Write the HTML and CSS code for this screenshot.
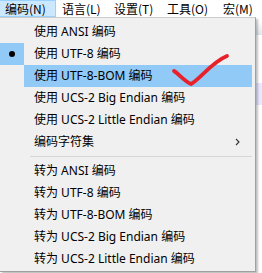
FILE: index.html
```html
<!DOCTYPE html>
<html>
<head>
<meta charset="utf-8">
<link rel="stylesheet" href="styles.css">
</head>
<body>
<div class="window">
  <nav class="menubar">
    <span class="mb-item active w1">编码(N)</span>
    <span class="mb-item w2">语言(L)</span>
    <span class="mb-item w3">设置(T)</span>
    <span class="mb-item w4">工具(O)</span>
    <span class="mb-item">宏(M)</span>
  </nav>
  <div class="workspace">
    <div class="toolbar"></div>
    <div class="editor">
      <div class="curline"></div>
    </div>
  </div>
  <div class="dropdown">
    <div class="item"><span class="gutter"></span><span class="label">使用 ANSI 编码</span></div>
    <div class="item"><span class="gutter checked"><span class="dot"></span></span><span class="label">使用 UTF-8 编码</span></div>
    <div class="item hover"><span class="gutter"></span><span class="label">使用 UTF-8-BOM 编码</span></div>
    <div class="item"><span class="gutter"></span><span class="label">使用 UCS-2 Big Endian 编码</span></div>
    <div class="item"><span class="gutter"></span><span class="label">使用 UCS-2 Little Endian 编码</span></div>
    <div class="item"><span class="gutter"></span><span class="label">编码字符集</span>
      <svg class="arrow" width="5" height="8" viewBox="0 0 5 8"><path d="M1 1 L4 4 L1 7" fill="none" stroke="#333" stroke-width="1.1"/></svg>
    </div>
    <div class="sep"></div>
    <div class="item"><span class="gutter"></span><span class="label">转为 ANSI 编码</span></div>
    <div class="item"><span class="gutter"></span><span class="label">转为 UTF-8 编码</span></div>
    <div class="item"><span class="gutter"></span><span class="label">转为 UTF-8-BOM 编码</span></div>
    <div class="item"><span class="gutter"></span><span class="label">转为 UCS-2 Big Endian 编码</span></div>
    <div class="item"><span class="gutter"></span><span class="label">转为 UCS-2 Little Endian 编码</span></div>
  </div>
  <svg class="tick" width="262" height="273" viewBox="0 0 262 273">
    <path d="M174 71 C179 74 184 81 191 84 C200 79 212 62 227 56" fill="none" stroke="#e8222a" stroke-width="3.8" stroke-linecap="round" stroke-linejoin="round"/>
  </svg>
</div>
</body>
</html>
```
FILE: styles.css
```css
* { box-sizing: border-box; }
html, body { margin: 0; padding: 0; background: #ffffff; }
body {
  font-family: "Noto Sans", "Noto Sans CJK SC", sans-serif;
  font-size: 12px;
  color: #000;
  width: 262px;
  height: 273px;
  overflow: hidden;
}
.window { position: relative; width: 262px; height: 273px; }
.menubar {
  display: flex;
  height: 17px;
  background: #ffffff;
  white-space: nowrap;
  font-family: "Noto Sans CJK SC", "Noto Sans", sans-serif;
}
.mb-item {
  display: block;
  flex: none;
  height: 17px;
  line-height: 15px;
  padding-left: 6px;
  border: 1px solid transparent;
  border-left: none;
  white-space: nowrap;
}
.mb-item.active {
  background: #cce8ff;
  border-color: #99d1ff;
  padding-left: 5px;
}
.w1 { width: 56px; }
.w2 { width: 52px; }
.w3 { width: 53px; }
.w4 { width: 56px; }
.workspace { display: flex; flex-direction: column; }
.toolbar { height: 14px; margin-top: 4px; background: linear-gradient(#ffffff, #dfe6ee); }
.editor { flex: 1; height: 242px; background: #fff; padding-top: 48px; }
.curline { height: 22px; background: #e8e8ff; }

.dropdown {
  position: absolute;
  left: 0;
  top: 17px;
  width: 256px;
  height: 255px;
  background: #f0f0f0;
  border-top: 1px solid #cccccc;
  border-right: 1px solid #a0a0a0;
  border-bottom: 1px solid #a0a0a0;
  box-shadow: 2px 2px 2px rgba(0,0,0,0.25);
  padding: 3px 3px 0 0;
}
.item {
  display: flex;
  align-items: center;
  height: 22px;
  line-height: 22px;
  white-space: nowrap;
}
.gutter {
  width: 24px;
  height: 22px;
  flex: none;
  display: flex;
  align-items: center;
  justify-content: center;
  margin-right: 10px;
}
.gutter.checked { background: #91c9f7; }
.dot { width: 6px; height: 6px; border-radius: 50%; background: #000; }
.item.hover { background: linear-gradient(to right, transparent 24px, #91c9f7 24px); }
.label { flex: 1; }
.arrow { margin-right: 12px; }
.sep {
  height: 7px;
  margin-left: 30px;
  padding-top: 3px;
}
.sep::before {
  content: "";
  display: block;
  height: 1px;
  background: #d7d7d7;
}
.tick { position: absolute; left: 0; top: 0; pointer-events: none; }
```
